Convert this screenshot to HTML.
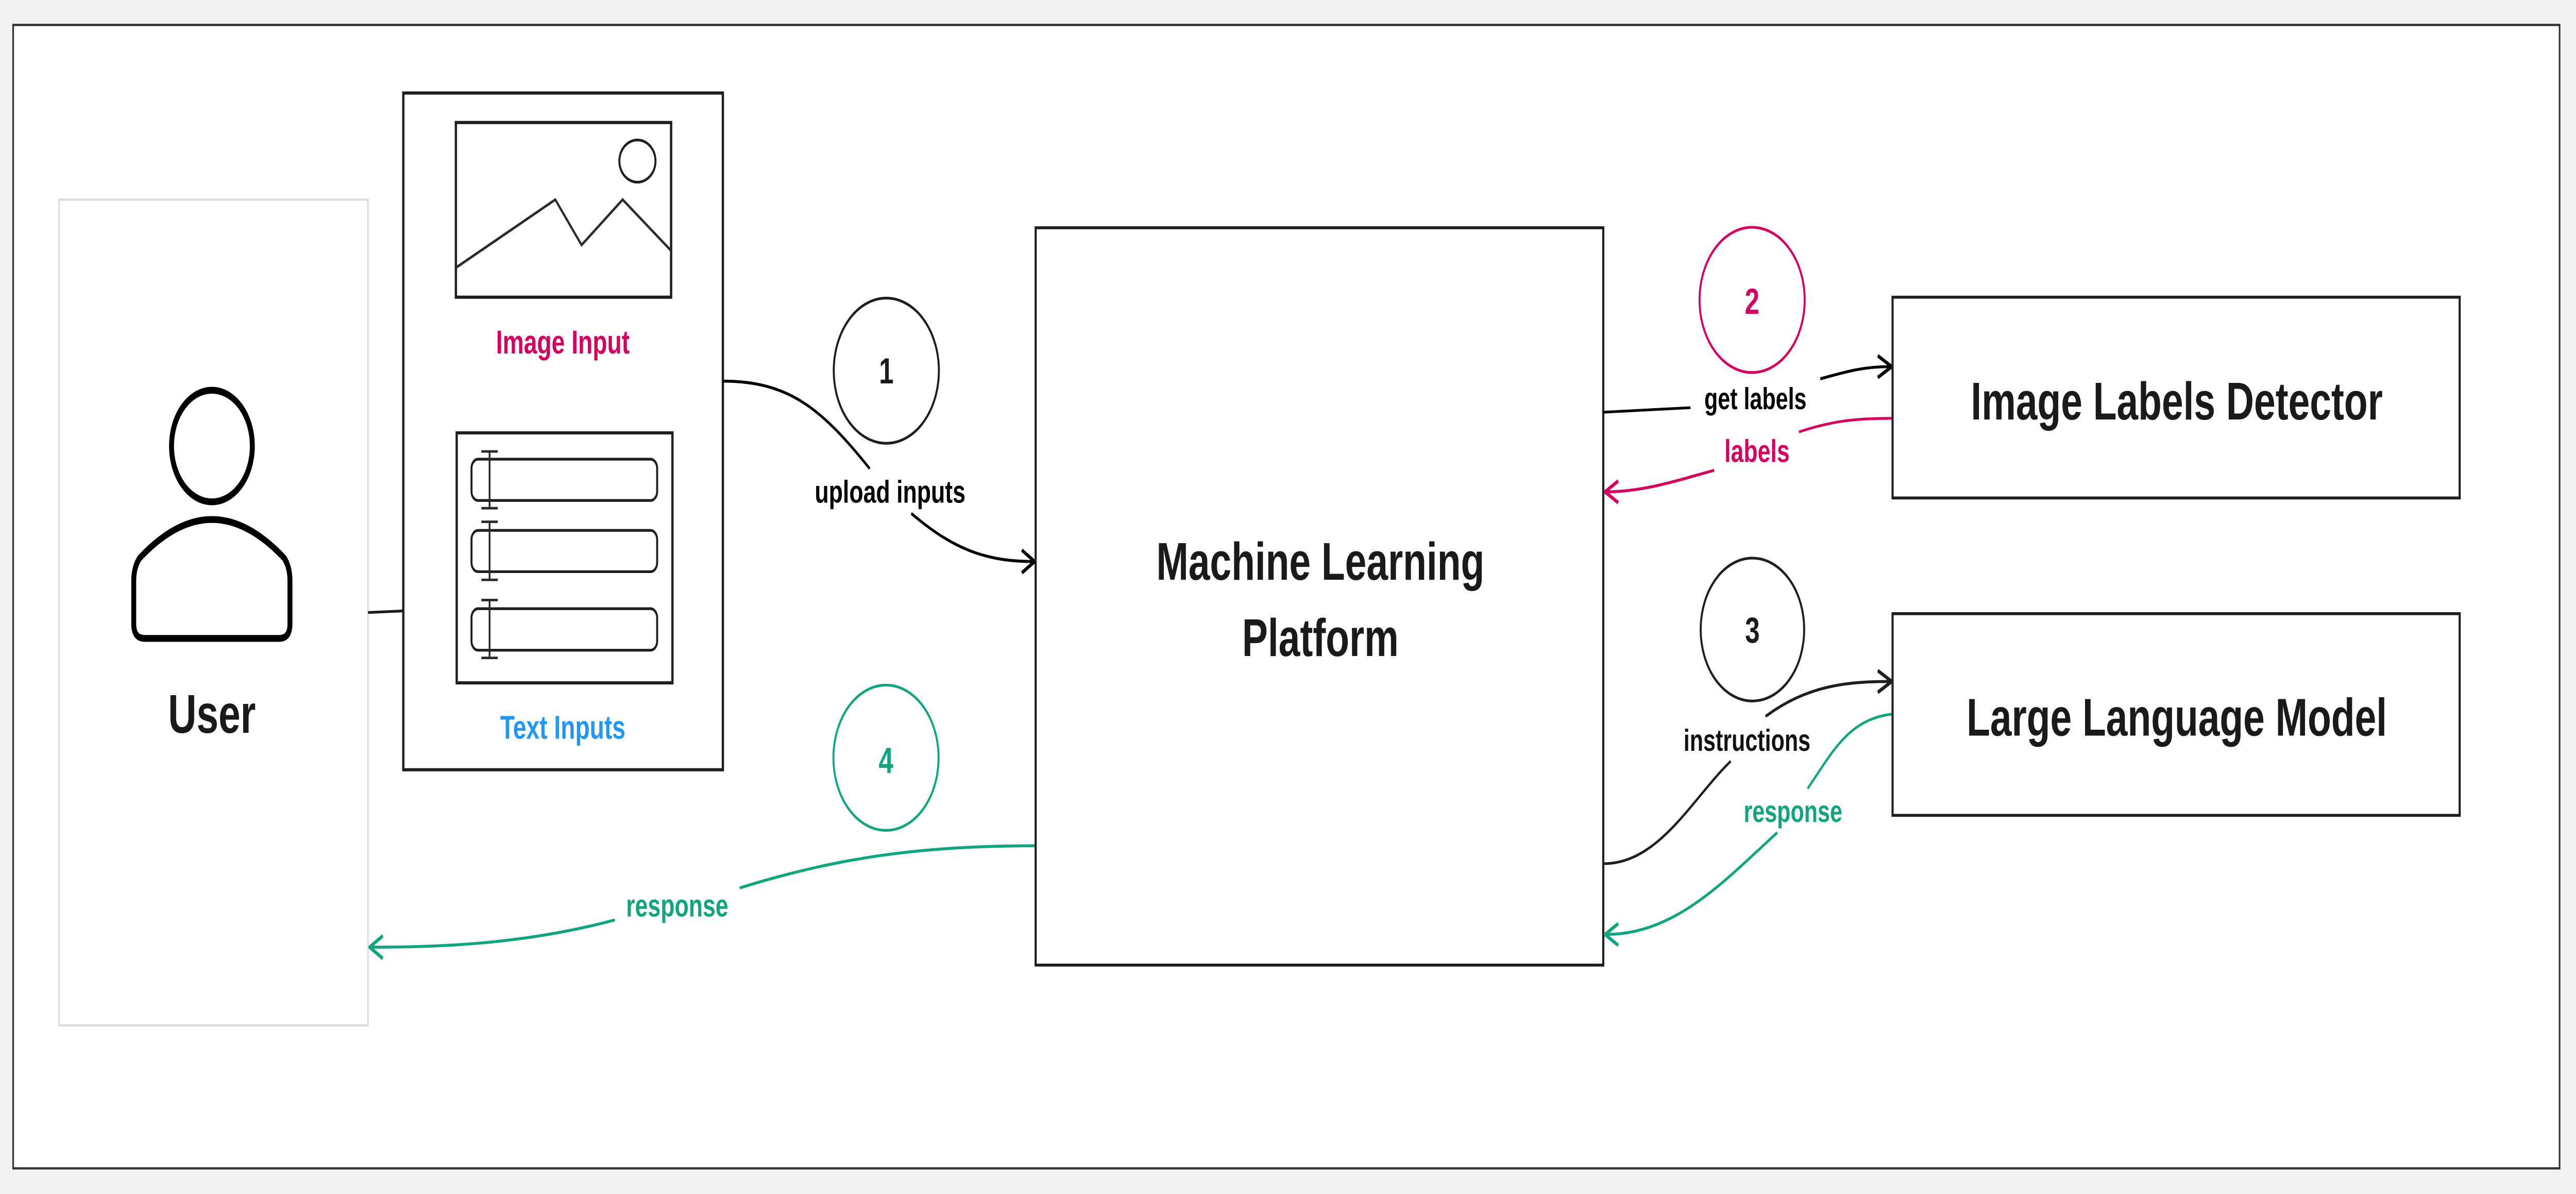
<!DOCTYPE html>
<html><head><meta charset="utf-8"><style>
html,body{margin:0;padding:0;background:#f2f2f2;width:100vw;height:100vh;overflow:hidden;}
svg{display:block;width:100vw;height:100vh;}
text{font-family:"Liberation Sans",Arial,sans-serif;font-weight:700;}
</style></head><body>
<svg viewBox="0 0 1568 526.3" preserveAspectRatio="none" xmlns="http://www.w3.org/2000/svg">
<rect x="0" y="0" width="1568" height="526.3" fill="#f2f2f2"/>
<rect x="8" y="11" width="1550" height="504" fill="#fff" stroke="#333" stroke-width="1"/>

<rect x="36" y="88" width="188" height="364" fill="#fff" stroke="#dedede" stroke-width="1"/>
<circle cx="129" cy="196.6" r="24.6" fill="none" stroke="#000" stroke-width="3"/>
<path d="M81.4,256 Q81.4,250 85,246 Q129,212 173,246 Q176.5,250 176.5,256 L176.5,275 Q176.5,281.4 170,281.4 L88,281.4 Q81.4,281.4 81.4,275 Z" fill="none" stroke="#000" stroke-width="3" stroke-linejoin="round"/>
<text x="129" y="323" font-size="24" text-anchor="middle" fill="#1a1a1a">User</text>
<path d="M224,270 L245,269.3" stroke="#1a1a1a" stroke-width="1.2" fill="none"/>

<rect x="245.5" y="41" width="194.5" height="298.3" fill="#fff" stroke="#1e1e1e" stroke-width="1.4"/>
<rect x="277.5" y="54" width="131" height="77" fill="none" stroke="#1e1e1e" stroke-width="1.4"/>
<ellipse cx="388" cy="71" rx="11" ry="9.3" fill="none" stroke="#1e1e1e" stroke-width="1.2"/>
<polyline points="277.5,118 338,88 354,108 379,88 408.5,110.5" fill="none" stroke="#2a2a2a" stroke-width="1.2"/>
<text x="342.6" y="155.8" font-size="14.5" text-anchor="middle" fill="#d4005f">Image Input</text>
<rect x="278" y="190.8" width="131.3" height="110.2" fill="none" stroke="#1e1e1e" stroke-width="1.4"/>
<rect x="287" y="202.4" width="113" height="18.2" rx="4" fill="none" stroke="#1e1e1e" stroke-width="1.2"/>
<rect x="287" y="233.8" width="113" height="18.2" rx="4" fill="none" stroke="#1e1e1e" stroke-width="1.2"/>
<rect x="287" y="268.3" width="113" height="18.3" rx="4" fill="none" stroke="#1e1e1e" stroke-width="1.2"/>
<g stroke="#2a2a2a" stroke-width="1.1" fill="none">
<path d="M298,199 V224 M293,199 H303 M293,224 H303"/>
<path d="M298,230 V255.6 M293,230 H303 M293,255.6 H303"/>
<path d="M298,264.5 V290 M293,264.5 H303 M293,290 H303"/>
</g>
<text x="342.6" y="325.6" font-size="14.5" text-anchor="middle" fill="#2196f3">Text Inputs</text>

<circle cx="539.5" cy="163.4" r="32" fill="none" stroke="#1e1e1e" stroke-width="1.2"/>
<text x="539.5" y="169" font-size="16" text-anchor="middle" fill="#1a1a1a">1</text>
<path d="M440,168 C480,168 500,180 529.4,206.6" stroke="#000" stroke-width="1.3" fill="none"/>
<text x="541.8" y="221.6" font-size="14" text-anchor="middle" fill="#000">upload inputs</text>
<path d="M554.7,226.3 C580,242 600,247.5 629,247.5" stroke="#000" stroke-width="1.3" fill="none"/>
<path d="M622,242.5 L629.8,247.5 L622,252.5" stroke="#000" stroke-width="1.6" fill="none" stroke-linejoin="round"/>

<circle cx="539.3" cy="334" r="32" fill="none" stroke="#12a37f" stroke-width="1.2"/>
<text x="539.3" y="340.7" font-size="16" text-anchor="middle" fill="#12a37f">4</text>
<path d="M629.7,372.8 C560,372.8 510,378 450.2,391.4" stroke="#12a37f" stroke-width="1.3" fill="none"/>
<text x="412.2" y="404" font-size="14" text-anchor="middle" fill="#12a37f">response</text>
<path d="M374.3,405.5 C320,416 270,417.5 226,417.5" stroke="#12a37f" stroke-width="1.3" fill="none"/>
<path d="M233,412.5 L225,417.5 L233,422.5" stroke="#12a37f" stroke-width="1.6" fill="none" stroke-linejoin="round"/>

<rect x="630.4" y="100.4" width="345.5" height="325" fill="#fff" stroke="#1e1e1e" stroke-width="1.3"/>
<text x="803.7" y="255.5" font-size="23.5" text-anchor="middle" fill="#1a1a1a">Machine Learning</text>
<text x="803.7" y="289.2" font-size="23.5" text-anchor="middle" fill="#1a1a1a">Platform</text>

<circle cx="1066.5" cy="132.2" r="32" fill="none" stroke="#d4005f" stroke-width="1.2"/>
<text x="1066.5" y="138.3" font-size="16" text-anchor="middle" fill="#d4005f">2</text>
<path d="M976,181.7 L1029,179.7" stroke="#000" stroke-width="1.2" fill="none"/>
<text x="1068.5" y="180.3" font-size="13.5" text-anchor="middle" fill="#000">get labels</text>
<path d="M1108,167 C1125,163.5 1135,161.6 1150.5,161.6" stroke="#000" stroke-width="1.3" fill="none"/>
<path d="M1143,156.8 L1151.5,161.6 L1143,166.4" stroke="#000" stroke-width="1.6" fill="none" stroke-linejoin="round"/>
<path d="M1151.5,184.4 C1130,184.4 1115,185.5 1095,190.4" stroke="#d4005f" stroke-width="1.2" fill="none"/>
<text x="1069.5" y="203.6" font-size="14" text-anchor="middle" fill="#d4005f">labels</text>
<path d="M1043.4,207.3 C1020,212 1000,216.8 977.5,216.8" stroke="#d4005f" stroke-width="1.3" fill="none"/>
<path d="M985,212 L977,216.8 L985,221.6" stroke="#d4005f" stroke-width="1.6" fill="none" stroke-linejoin="round"/>

<circle cx="1066.7" cy="277.5" r="31.5" fill="none" stroke="#1e1e1e" stroke-width="1.2"/>
<text x="1066.7" y="283.3" font-size="16" text-anchor="middle" fill="#1a1a1a">3</text>
<path d="M976,380.7 C1010,380.7 1030,352 1053.5,335.5" stroke="#1e1e1e" stroke-width="1.2" fill="none"/>
<text x="1063.4" y="331" font-size="13.5" text-anchor="middle" fill="#111">instructions</text>
<path d="M1074.7,315.8 C1100,302 1125,300.4 1150.5,300.4" stroke="#1e1e1e" stroke-width="1.3" fill="none"/>
<path d="M1143,295.6 L1151.5,300.4 L1143,305.2" stroke="#1e1e1e" stroke-width="1.6" fill="none" stroke-linejoin="round"/>
<path d="M1151.5,314.8 C1125,317 1115,332 1100.3,347.6" stroke="#12a37f" stroke-width="1.2" fill="none"/>
<text x="1091.4" y="362.3" font-size="13.5" text-anchor="middle" fill="#12a37f">response</text>
<path d="M1081.8,367 C1050,388 1020,411.9 977.5,411.9" stroke="#12a37f" stroke-width="1.3" fill="none"/>
<path d="M985,407.1 L977,411.9 L985,416.7" stroke="#12a37f" stroke-width="1.6" fill="none" stroke-linejoin="round"/>

<rect x="1152" y="131" width="345.2" height="88.5" fill="#fff" stroke="#1e1e1e" stroke-width="1.3"/>
<text x="1325" y="184.9" font-size="23.5" text-anchor="middle" fill="#1a1a1a">Image Labels Detector</text>
<rect x="1152" y="270.5" width="345.2" height="88.9" fill="#fff" stroke="#1e1e1e" stroke-width="1.3"/>
<text x="1325" y="324.3" font-size="23.5" text-anchor="middle" fill="#1a1a1a">Large Language Model</text>
</svg>
</body></html>
